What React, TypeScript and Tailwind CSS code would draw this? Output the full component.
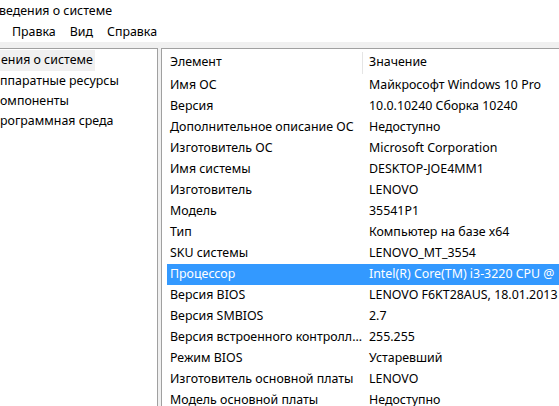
import React from "react";

const rows: [string, string][] = [
  ["Имя ОС", "Майкрософт Windows 10 Pro"],
  ["Версия", "10.0.10240 Сборка 10240"],
  ["Дополнительное описание ОС", "Недоступно"],
  ["Изготовитель ОС", "Microsoft Corporation"],
  ["Имя системы", "DESKTOP-JOE4MM1"],
  ["Изготовитель", "LENOVO"],
  ["Модель", "35541P1"],
  ["Тип", "Компьютер на базе x64"],
  ["SKU системы", "LENOVO_MT_3554"],
  ["Процессор", "Intel(R) Core(TM) i3-3220 CPU @"],
  ["Версия BIOS", "LENOVO F6KT28AUS, 18.01.2013"],
  ["Версия SMBIOS", "2.7"],
  ["Версия встроенного контролл...", "255.255"],
  ["Режим BIOS", "Устаревший"],
  ["Изготовитель основной платы", "LENOVO"],
  ["Модель основной платы", "Недоступно"],
];

export default function App() {
  return (
    <div
      className="w-[559px] h-[406px] overflow-hidden bg-white text-[12.4px] text-black flex flex-col"
      style={{ fontFamily: '"Noto Sans", "Open Sans", sans-serif' }}
    >
      <div className="h-[22px] shrink-0 flex items-center whitespace-nowrap leading-none">
        <span className="-ml-[1px]">ведения о системе</span>
      </div>
      <div className="h-[20px] shrink-0 flex items-center whitespace-nowrap leading-none">
        <span className="ml-[12px]">Правка</span>
        <span className="ml-[14px]">Вид</span>
        <span className="ml-[14px]">Справка</span>
      </div>
      <div className="h-[6px] shrink-0 bg-[#f0f0f0]" />
      <div className="flex-1 flex bg-[#f0f0f0] min-h-0">
        <div className="w-[158px] shrink-0 bg-white border-t border-r border-[#a0a0a0] pt-[1px] whitespace-nowrap overflow-hidden">
          <div className="h-[21px] flex items-center">
            <span className="bg-[#f0f0f0] h-[21px] flex items-center pr-[2px] pl-[1px]">ения о системе</span>
          </div>
          <div className="h-[20px] flex items-center">ппаратные ресурсы</div>
          <div className="h-[20px] flex items-center">омпоненты</div>
          <div className="h-[20px] flex items-center">рограммная среда</div>
        </div>
        <div className="w-[3px] shrink-0" />
        <div className="flex-1 min-w-0 bg-white border-t border-l border-[#a0a0a0] pl-[5px] pt-[1px] overflow-hidden whitespace-nowrap">
          <div className="h-[25px] flex items-center">
            <div className="w-[195px] shrink-0 pl-[3px]">Элемент</div>
            <div className="w-px h-[22px] bg-[#e5e5e5] shrink-0" />
            <div className="pl-[6px]">Значение</div>
          </div>
          {rows.map(([k, v]) => {
            const sel = k === "Процессор";
            return (
              <div
                key={k}
                className={
                  sel
                    ? "h-[21px] flex items-center bg-[#3399ff] text-white"
                    : "h-[21px] flex items-center"
                }
              >
                <div className="w-[196px] shrink-0 pl-[3px] overflow-hidden">{k}</div>
                <div className="pl-[6px]">{v}</div>
              </div>
            );
          })}
        </div>
      </div>
    </div>
  );
}
